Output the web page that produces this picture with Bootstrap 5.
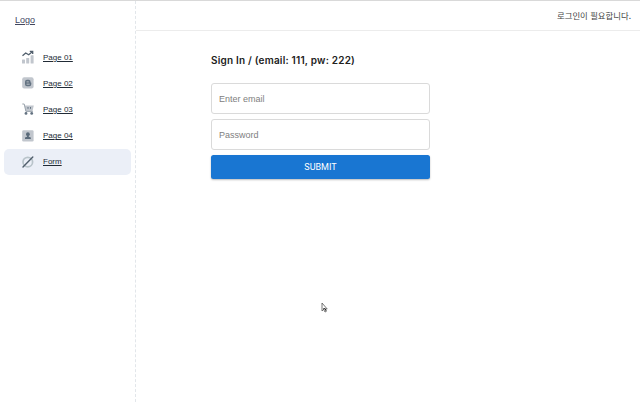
<!DOCTYPE html>
<html lang="ko">
<head>
<meta charset="utf-8">
<meta name="viewport" content="width=device-width, initial-scale=1">
<title>Sign In</title>
<link href="https://cdn.jsdelivr.net/npm/bootstrap@5.3.0/dist/css/bootstrap.min.css" rel="stylesheet">
<style>
body{font-family:"Liberation Sans","Noto Sans CJK KR",sans-serif;font-size:8px;line-height:12px;color:#212b36;height:402px;border-top:1px solid #d9d9d9}
.side{width:136px;border-right:1px dashed #e2e6ea}
.brand{font-size:9px;padding:13px 0 0 15px;height:43px;color:#43475f}
.side-menu{padding:0 4px}
.side-link{height:26.2px;padding-left:17px;border-radius:5px;color:#212b36;gap:8px;font-size:8px}
.side-link span{padding-top:1px}
.side-link.active{background:#ebeff7}
.side-link svg{width:14px;height:14px;flex:none}
.top{height:30px;border-bottom:1px solid #ececec;font-family:"Noto Sans CJK KR",sans-serif;font-size:8.4px;color:#444;padding:0 9px 2px 0}
.sign{width:219px;margin-left:75px;padding-top:22px}
.sign h1{font-family:Inter,"Liberation Sans",sans-serif;font-size:10px;line-height:14px;font-weight:600;letter-spacing:.2px;color:#212121;margin:0 0 16px;white-space:nowrap}
.sign .form-control{height:31px;font-size:9px;line-height:13px;padding:0 7px;border:1px solid #dadada;border-radius:3px;margin-bottom:5px}
.sign .form-control::placeholder{color:#808080;opacity:1}
.sign .btn{height:24px;padding:0;border:0;border-radius:2.5px;background:#1976d2;font:400 9px/24px Roboto,sans-serif;box-shadow:0 1px 2px #0004}
.pointer{position:absolute;left:320px;top:302px}
</style>
</head>
<body class="d-flex overflow-hidden bg-white">
<aside class="side d-flex flex-column flex-shrink-0">
  <div class="brand"><a href="#" class="text-reset">Logo</a></div>
  <nav class="side-menu d-flex flex-column">
    <a class="side-link d-flex align-items-center" href="#"><svg viewBox="0 0 14 14"><g fill="#c1c6cd"><rect x="1" y="9.5" width="3" height="4" rx=".5"/><rect x="5.2" y="8" width="3" height="5.5" rx=".5"/><rect x="9.6" y="5.3" width="3" height="8.200" rx=".5"/></g><path d="M1.500 5.700 4.700 3l3 1.800 3.600-3M8.800 1.400h2.900v2.700" fill="none" stroke="#505e6c" stroke-width="1.3"/></svg><span>Page 01</span></a>
    <a class="side-link d-flex align-items-center" href="#"><svg viewBox="0 0 14 14"><rect x="1.2" y="1.2" width="11.4" height="11.4" rx="2" fill="#c1c6cd"/><path d="M6 3.8h1.500c1.200 0 2 .8 2 1.800v.6l.8.5v1.500a2 2 0 0 1-2 2H6a2 2 0 0 1-2-2V5.800a2 2 0 0 1 2-2Z" fill="#637281"/><path d="M6 5.900h1.400M6 8.200h2.300" stroke="#c1c6cd" stroke-width=".9" stroke-linecap="round"/></svg><span>Page 02</span></a>
    <a class="side-link d-flex align-items-center" href="#"><svg viewBox="0 0 14 14"><path d="M3.500 3.600h9.300l-1.300 5.300H4.700Z" fill="#c1c6cd"/><path d="M1.300 2h1.900l1.700 7.400h7" fill="none" stroke="#9ba4ad"/><path d="M7 5v1.800m2.500-1.800v1.800" stroke="#637281"/><g fill="#637281"><circle cx="5" cy="11.4" r="1.4"/><circle cx="10.7" cy="11.4" r="1.4"/></g></svg><span>Page 03</span></a>
    <a class="side-link d-flex align-items-center" href="#"><svg viewBox="0 0 14 14"><rect x="1.2" y="1.2" width="11.4" height="11.4" rx="1.3" fill="#c1c6cd"/><circle cx="6.9" cy="5.2" r="1.9" fill="#596979"/><path d="M6 6.500h1.800v1.200l2 .8v1.600H4V8.500l2-.8Z" fill="#596979"/></svg><span>Page 04</span></a>
    <a class="side-link active d-flex align-items-center" href="#"><svg viewBox="0 0 14 14"><circle cx="6.8" cy="7.1" r="4.8" fill="none" stroke="#b9c4ca" stroke-width="1.700"/><path d="M2 12 11.800 2" stroke="#505e6c" stroke-width="1.4" stroke-linecap="round"/></svg><span>Form</span></a>
  </nav>
</aside>
<main class="flex-grow-1">
  <header class="top d-flex align-items-center justify-content-end">로그인이 필요합니다.</header>
  <form class="sign">
    <h1>Sign In / (email: 111, pw: 222)</h1>
    <input class="form-control" type="text" placeholder="Enter email" aria-label="Email">
    <input class="form-control" type="password" placeholder="Password" aria-label="Password">
    <button class="btn btn-primary w-100 d-block" type="button">SUBMIT</button>
  </form>
</main>
<svg class="pointer" width="8" height="12" viewBox="0 0 8 12"><path d="M2 1v8l1.700-1.600 1.300 2.600 1.300-.6L5.200 7h2Z" fill="#fff" stroke="#555" stroke-width=".8"/><path d="m3 7 2-.4 1 2" stroke="#222" fill="none"/></svg>
<script src="https://cdn.jsdelivr.net/npm/bootstrap@5.3.0/dist/js/bootstrap.bundle.min.js"></script>
</body>
</html>
